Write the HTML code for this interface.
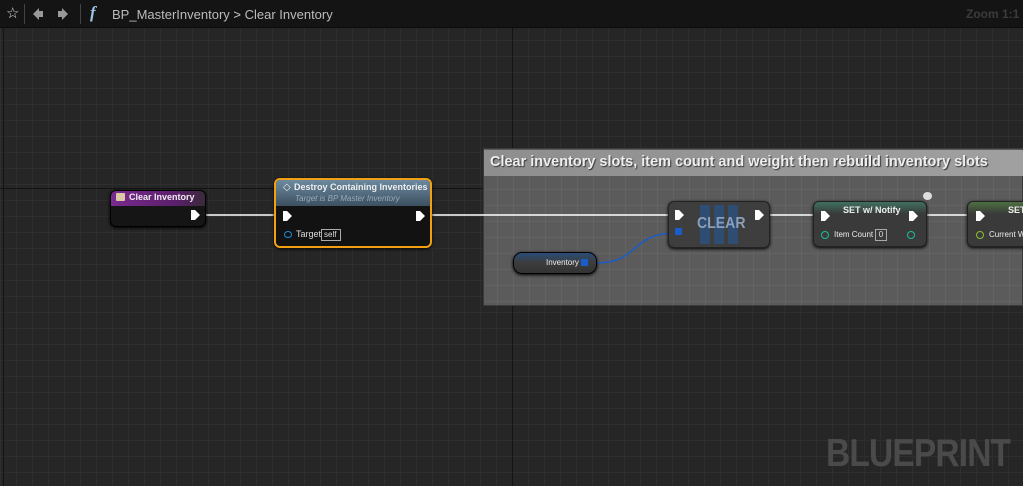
<!DOCTYPE html>
<html><head><meta charset="utf-8"><style>
*{margin:0;padding:0;box-sizing:border-box}
body{width:1023px;height:486px;overflow:hidden;background:#262626;font-family:"Liberation Sans",sans-serif;position:relative}
.grid{position:absolute;left:0;top:28px;width:1023px;height:458px;
background-color:#262626;
background-image:linear-gradient(#2e2e2e 1px,transparent 1px),linear-gradient(90deg,#2e2e2e 1px,transparent 1px);
background-size:16px 16px;background-position:0 -4px}
.abs{position:absolute}
.top{left:0;top:0;width:1023px;height:28px;background:#141414;border-bottom:1px solid #0c0c0c}
.node{position:absolute;border-radius:6px;background:#151515;box-shadow:0 1px 3px #000;border:1px solid #000;overflow:hidden}
.exec{position:absolute;width:9px;height:10px;background:#fff;clip-path:polygon(0 0,45% 0,100% 50%,45% 100%,0 100%)}
.t{position:absolute;color:#eee;font-size:9px;white-space:nowrap}
</style></head><body>
<div class="grid"></div>
<div class="abs" style="left:512px;top:28px;width:1px;height:458px;background:#141414"></div>
<div class="abs" style="left:0;top:188px;width:1023px;height:1px;background:#141414"></div>
<div class="abs" style="left:3px;top:28px;width:1px;height:458px;background:#141414"></div>

<div class="abs top"></div>
<div class="abs" style="left:6px;top:4px;color:#ddd;font-size:15px">☆</div>
<div class="abs" style="left:24px;top:4px;width:1px;height:20px;background:#444"></div>
<svg class="abs" style="left:32px;top:7px" width="12" height="14"><path d="M1 7 L7 1 L7 4 L11 4 L11 10 L7 10 L7 13 Z" fill="#999"/></svg>
<svg class="abs" style="left:57px;top:7px" width="12" height="14"><path d="M11 7 L5 1 L5 4 L1 4 L1 10 L5 10 L5 13 Z" fill="#999"/></svg>
<div class="abs" style="left:80px;top:4px;width:1px;height:20px;background:#444"></div>
<div class="abs" style="left:90px;top:3px;color:#9cc3e6;font-size:17px;font-style:italic;font-family:'Liberation Serif',serif;font-weight:bold">f</div>
<div class="abs" style="left:112px;top:7px;color:#bbb;font-size:13px">BP_MasterInventory <span style="color:#ccc">&gt;</span> Clear Inventory</div>
<div class="abs" style="left:966px;top:7px;color:#3c3c3c;font-size:12px;font-weight:bold">Zoom 1:1</div>

<div class="abs" style="left:826px;top:432px;color:#4a4a4a;font-size:39px;font-weight:bold;letter-spacing:-1px;transform:scaleX(0.86);transform-origin:left">BLUEPRINT</div>

<!-- comment box -->
<div class="abs" style="left:483px;top:148px;width:540px;height:158px;background:#5b5b5b;border:1px solid #3a3a3a;background-image:linear-gradient(#636363 1px,transparent 1px),linear-gradient(90deg,#636363 1px,transparent 1px);background-size:16px 16px;background-position:13px 8px"></div>
<div class="abs" style="left:484px;top:150px;width:539px;height:26px;background:linear-gradient(90deg,#8e8e8e,#a0a0a0);"></div>
<div class="abs" style="left:490px;top:153px;color:#eee;font-size:15px;font-weight:bold;text-shadow:1px 1px 1px #333;transform:scaleX(0.965);transform-origin:left">Clear inventory slots, item count and weight then rebuild inventory slots</div>

<!-- wires -->
<svg class="abs" style="left:0;top:0" width="1023" height="486">
<line x1="204" y1="215" x2="280" y2="215" stroke="#fff" stroke-width="1.5"/>
<line x1="426" y1="215" x2="675" y2="215" stroke="#fff" stroke-width="1.5"/>
<line x1="764" y1="215" x2="820" y2="215" stroke="#fff" stroke-width="1.5"/>
<line x1="920" y1="215" x2="975" y2="215" stroke="#fff" stroke-width="1.5"/>
<path d="M596 263 C640 263,630 233,676 233" stroke="#1a5cc8" stroke-width="1.5" fill="none"/>
</svg>

<!-- Clear Inventory -->
<div class="node" style="left:110px;top:190px;width:96px;height:37px">
<div style="height:15px;background:linear-gradient(90deg,#7a2a8e,#5a1f6a 70%,#3a2a3a)"></div>
</div>
<div class="abs" style="left:116px;top:193px;width:9px;height:8px;background:#d9c9a6;border-radius:1px"></div>
<div class="t" style="left:129px;top:192px;font-weight:bold">Clear Inventory</div>
<div class="exec" style="left:191px;top:210px"></div>

<!-- Destroy -->
<div class="node" style="left:274px;top:178px;width:158px;height:70px;border:2px solid #f0a010;background:#121212">
<div style="height:26px;background:linear-gradient(#6d8aa0,#3c5060)"></div>
</div>
<div class="t" style="left:283px;top:182px;font-size:10px">◇</div>
<div class="t" style="left:294px;top:182px;font-weight:bold">Destroy Containing Inventories</div>
<div class="t" style="left:295px;top:194px;color:#9ab;font-style:italic;font-size:8px">Target is BP Master Inventory</div>
<div class="exec" style="left:283px;top:211px"></div>
<div class="exec" style="left:416px;top:211px"></div>
<div class="abs" style="left:284px;top:231px;width:8px;height:7px;border:1.5px solid #1a8ee0;border-radius:50%"></div>
<div class="t" style="left:296px;top:229px;color:#ddd">Target</div>
<div class="abs" style="left:321px;top:229px;width:20px;height:12px;border:1px solid #aaa;color:#ddd;font-size:8px;padding-left:2px">self</div>

<!-- Inventory getter -->
<div class="node" style="left:513px;top:252px;width:84px;height:22px;border-radius:9px;background:linear-gradient(#2a4d78,#3c3c3c 50%,#333)"></div>
<div class="t" style="left:546px;top:258px;font-size:8px">Inventory</div>
<div class="abs" style="left:581px;top:259px;width:7px;height:7px;background:#1a5cc8"></div>

<!-- CLEAR -->
<div class="node" style="left:668px;top:201px;width:102px;height:47px;background:#3e3e3e;border-color:#222"></div>
<div class="abs" style="left:700px;top:205px;width:10px;height:39px;background:#2f4d72"></div>
<div class="abs" style="left:714px;top:205px;width:10px;height:39px;background:#2f4d72"></div>
<div class="abs" style="left:728px;top:205px;width:10px;height:39px;background:#2f4d72"></div>
<div class="t" style="left:697px;top:215px;font-size:16px;font-weight:bold;color:#8a9fb8;transform:scaleX(0.88);transform-origin:left">CLEAR</div>
<div class="exec" style="left:675px;top:210px"></div>
<div class="exec" style="left:755px;top:210px"></div>
<div class="abs" style="left:675px;top:228px;width:7px;height:7px;background:#1a5cc8"></div>

<!-- SET w/ Notify -->
<div class="node" style="left:813px;top:201px;width:114px;height:46px;background:#3a3a3a;border-color:#222">
<div style="height:12px;background:linear-gradient(#3f7060,#3a3a3a)"></div></div>
<div class="t" style="left:843px;top:205px;font-weight:bold;font-size:9px">SET w/ Notify</div>
<div class="exec" style="left:821px;top:211px"></div>
<div class="exec" style="left:909px;top:211px"></div>
<div class="abs" style="left:821px;top:231px;width:8px;height:8px;border:1.5px solid #1bbf9a;border-radius:50%"></div>
<div class="t" style="left:834px;top:230px;font-size:8px">Item Count</div>
<div class="abs" style="left:875px;top:229px;width:12px;height:12px;border:1px solid #aaa;color:#ddd;font-size:8px;text-align:center">0</div>
<div class="abs" style="left:907px;top:231px;width:8px;height:8px;border:1.5px solid #1bbf9a;border-radius:50%"></div>
<div class="abs" style="left:923px;top:192px;width:9px;height:8px;background:#ddd;border-radius:50%"></div>

<!-- SET partial -->
<div class="node" style="left:967px;top:201px;width:70px;height:46px;background:#3a3a3a;border-color:#222">
<div style="height:12px;background:linear-gradient(#4d7040,#3a3a3a)"></div></div>
<div class="t" style="left:1008px;top:205px;font-weight:bold">SET</div>
<div class="exec" style="left:976px;top:211px"></div>
<div class="abs" style="left:976px;top:231px;width:8px;height:8px;border:1.5px solid #8ac030;border-radius:50%"></div>
<div class="t" style="left:989px;top:230px;font-size:8px">Current W</div>
</body></html>
